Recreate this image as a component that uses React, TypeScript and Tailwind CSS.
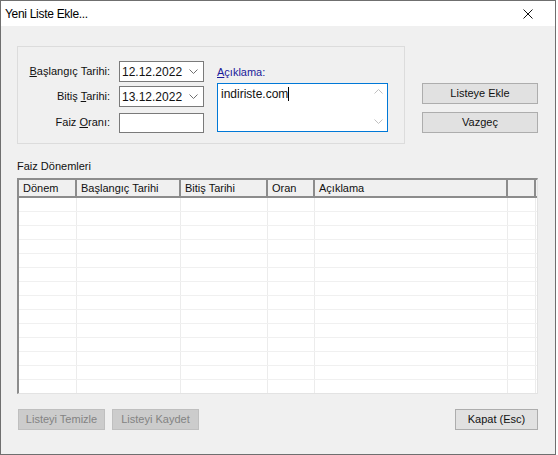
import React from 'react';

const font = { fontFamily: '"Liberation Sans", Arial, sans-serif' };

function Chevron({ dir = 'down' }: { dir?: 'down' | 'up' }) {
  return (
    <svg width="9" height="5" viewBox="0 0 9 5" className="block">
      <path
        d={dir === 'down' ? 'M0.5 0.5 L4.5 4.5 L8.5 0.5' : 'M0.5 4.5 L4.5 0.5 L8.5 4.5'}
        fill="none"
        stroke="currentColor"
        strokeWidth="1"
      />
    </svg>
  );
}

function DateBox({ value }: { value: string }) {
  return (
    <div className="w-[85px] h-[21px] bg-white border border-[#7a7a7a] flex items-center pl-[2px] pr-[5px]">
      <span className="flex-1 text-[12px] text-[#111] leading-none">{value}</span>
      <span className="text-[#707070]"><Chevron /></span>
    </div>
  );
}

function Btn({ label, width, disabled }: { label: string; width: string; disabled?: boolean }) {
  return (
    <div
      className={
        'h-[21px] flex items-center justify-center text-[11px] border ' +
        width +
        (disabled
          ? ' bg-[#cccccc] border-[#bfbfbf] text-[#838383]'
          : ' bg-[#e1e1e1] border-[#adadad] text-[#111]')
      }
    >
      {label}
    </div>
  );
}

const columns = [
  { title: 'Dönem', w: 'w-[58px]' },
  { title: 'Başlangıç Tarihi', w: 'w-[104px]' },
  { title: 'Bitiş Tarihi', w: 'w-[87px]' },
  { title: 'Oran', w: 'w-[47px]' },
  { title: 'Açıklama', w: 'w-[193px]' },
];

export default function App() {
  const rows = Array.from({ length: 14 });

  return (
    <div className="w-[558px] h-[455px] bg-white" style={font}>
      <div className="w-[556px] h-[455px] border border-[#6f6f6f] flex flex-col">
        {/* title bar */}
        <div className="h-[25px] bg-white flex items-center pl-[4px] pr-[22px]">
          <span className="flex-1 text-[12px] tracking-[-0.3px] text-black">Yeni Liste Ekle...</span>
          <svg width="10" height="10" viewBox="0 0 10 10">
            <path d="M0.5 0.5 L9.5 9.5 M9.5 0.5 L0.5 9.5" stroke="#111" strokeWidth="1" />
          </svg>
        </div>

        {/* body */}
        <div className="flex-1 bg-[#f0f0f0] pt-[20px] pl-[16px] text-[11px] text-[#111]">
          <div className="flex">
            {/* group box */}
            <div className="w-[388px] h-[98px] border border-[#dcdcdc] flex pt-[14px]">
              <div className="flex flex-col">
                <div className="flex items-center h-[21px]">
                  <span className="w-[92px] text-right">
                    <span className="underline">B</span>aşlangıç Tarihi:
                  </span>
                  <div className="ml-[9px]"><DateBox value="12.12.2022" /></div>
                </div>
                <div className="flex items-center h-[21px] mt-[4px]">
                  <span className="w-[92px] text-right">
                    Bitiş <span className="underline">T</span>arihi:
                  </span>
                  <div className="ml-[9px]"><DateBox value="13.12.2022" /></div>
                </div>
                <div className="flex items-center h-[21px] mt-[5px]">
                  <span className="w-[92px] text-right">
                    Faiz <span className="underline">O</span>ranı:
                  </span>
                  <div className="ml-[9px] w-[85px] h-[20px] bg-white border border-[#7a7a7a]" />
                </div>
              </div>
              <div className="ml-[13px] flex flex-col">
                <div className="h-[22px] flex items-center text-[#1b1b9a]">
                  <span className="underline">A</span>çıklama:
                </div>
                <div className="w-[171px] h-[49px] bg-white border border-[#0078d7] flex">
                  <div className="flex-1 pl-[3px] pt-[3px] text-[12px] leading-[14px] flex items-start">
                    indiriste.com<span className="inline-block w-[1px] h-[14px] bg-black" />
                  </div>
                  <div className="w-[17px] flex flex-col justify-between items-center pt-[5px] pb-[7px] text-[#c0c0c0]">
                    <Chevron dir="up" />
                    <Chevron />
                  </div>
                </div>
              </div>
            </div>

            {/* right buttons */}
            <div className="ml-[17px] pt-[37px] flex flex-col gap-[8px]">
              <Btn label="Listeye Ekle" width="w-[116px]" />
              <Btn label="Vazgeç" width="w-[116px]" />
            </div>
          </div>

          <div className="mt-[15px] h-[14px] leading-[14px]">Faiz Dönemleri</div>

          {/* list view */}
          <div className="mt-[5px] w-[521px] h-[216px] bg-white border-t-2 border-l-2 border-[#8c8c8c] border-r border-b border-r-[#e3e3e3] border-b-[#e3e3e3] overflow-hidden">
            <div className="flex h-[18px] bg-[#f0f0f0] border-b-2 border-[#8c8c8c]">
              {columns.map((c) => (
                <div
                  key={c.title}
                  className={c.w + ' h-full border-r-2 border-[#8c8c8c] pl-[4px] flex items-center leading-none'}
                >
                  {c.title}
                </div>
              ))}
              <div className="w-[28px] h-full border-r-2 border-[#8c8c8c]" />
            </div>
            {rows.map((_, i) => (
              <div key={i} className="flex h-[14px] border-b border-[#f0f0f0]">
                {columns.map((c) => (
                  <div key={c.title} className={c.w + ' h-full border-r border-[#ececec]'} />
                ))}
                <div className="w-[28px] h-full border-r border-[#ececec]" />
              </div>
            ))}
          </div>

          {/* bottom buttons */}
          <div className="mt-[15px] w-[521px] flex items-center">
            <div className="ml-[1px]"><Btn label="Listeyi Temizle" width="w-[87px]" disabled /></div>
            <div className="ml-[7px]"><Btn label="Listeyi Kaydet" width="w-[87px]" disabled /></div>
            <div className="ml-auto"><Btn label="Kapat (Esc)" width="w-[83px]" /></div>
          </div>
        </div>
      </div>
    </div>
  );
}
